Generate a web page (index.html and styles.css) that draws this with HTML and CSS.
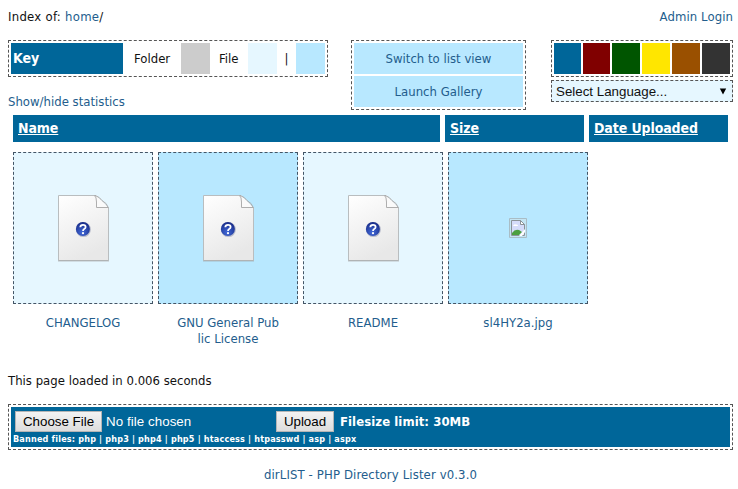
FILE: index.html
```html
<!DOCTYPE html>
<html lang="en">
<head>
<meta charset="utf-8">
<title>Index of: home/</title>
<link rel="stylesheet" href="styles.css">
</head>
<body>
<svg class="defs" width="0" height="0" aria-hidden="true">
  <defs>
    <linearGradient id="paper" x1="0" y1="0" x2="0.4" y2="1"><stop offset="0" stop-color="#fff"/><stop offset="1" stop-color="#e8e8e8"/></linearGradient>
    <radialGradient id="ball" cx="0.45" cy="0.75" r="0.75"><stop offset="0" stop-color="#4169d8"/><stop offset="1" stop-color="#172a86"/></radialGradient>
    <symbol id="doc" viewBox="0 0 54 68">
      <path d="M2.500 1.500H40L52.500 14V66.500H2.500Z" fill="url(#paper)" stroke="#b9bdbf"/>
      <path d="M2 67H53" stroke="#999" stroke-opacity=".55"/>
      <path d="M40 1.500V14H52.500Q48 9 45 6Z" fill="#fafafa"/>
      <path d="M38.500 1.500Q40.500 3 40.500 8V13.500H52M39 1.500Q44 3 46 6.500Q51 9 52.500 14" fill="none" stroke="#a5a5a5" stroke-width=".9"/>
      <circle cx="27.400" cy="35.600" r="7.500" fill="#b9bdcc"/>
      <circle cx="26.900" cy="35" r="7" fill="url(#ball)"/>
      <path d="M24.300 33.300Q24.400 30.900 27 30.900Q29.600 30.900 29.600 33Q29.600 34.200 28.200 35Q27 35.700 27 36.900" fill="none" stroke="#fff" stroke-width="1.800"/>
      <circle cx="27" cy="39.200" r="1.100" fill="#fff"/>
    </symbol>
  </defs>
</svg>
<header class="top"><div class="path">Index of: <a>home</a>/</div><a class="login">Admin Login</a></header>
<section class="tools">
  <div class="left">
    <div class="box key"><b class="key-title">Key</b><span class="folder">Folder</span><i class="chip grey"></i><span class="file">File</span><i class="chip pale"></i><span class="bar">|</span><i class="chip sky"></i></div>
    <a class="stats">Show/hide statistics</a>
  </div>
  <div class="box views"><a>Switch to list view</a><a>Launch Gallery</a></div>
  <div class="right">
    <div class="box swatches"><i class="blue"></i><i class="red"></i><i class="green"></i><i class="yellow"></i><i class="brown"></i><i class="dark"></i></div>
    <div class="language"><span>Select Language...</span><svg width="8" height="7" viewBox="0 0 8 7"><path d="M.8.500H7.200L4 6.500Z"/></svg></div>
  </div>
</section>
<div class="heads"><b>Name</b><b>Size</b><b>Date Uploaded</b></div>
<main class="grid">
  <div class="item"><div class="thumb"><svg class="doc"><use href="#doc"/></svg></div><a>CHANGELOG</a></div>
  <div class="item alt"><div class="thumb"><svg class="doc"><use href="#doc"/></svg></div><a>GNU General Pub<br>lic License</a></div>
  <div class="item"><div class="thumb"><svg class="doc"><use href="#doc"/></svg></div><a>README</a></div>
  <div class="item alt"><div class="thumb"><svg class="broken" viewBox="0 0 18 20"><path d="M.5.500H17.500V19.500H.500Z" fill="#c4e5f3" stroke="#a9bdc6"/><path d="M2.500 2.500H11.500L15.500 6.500V17.500H2.500Z" fill="#d5dcfa" stroke="#8b9398"/><path d="M11.500 2.500V6.500H15.500Z" fill="#fff" stroke="#8b9398"/><path d="M4 8Q5 5.500 7 6.500Q9 6 9 8Z" fill="#fff"/><path d="M3 17V15Q6 10.500 10 12L13 14L10 17Z" fill="#4b9f3f"/><path d="M10 18L16 11V14L13 18Z" fill="#fff"/></svg></div><a>sl4HY2a.jpg</a></div>
</main>
<p class="loaded">This page loaded in 0.006 seconds</p>
<section class="box upload"><div class="upload-inner">
  <div class="controls"><button class="choose">Choose File</button><span class="none">No file chosen</span><button class="send">Upload</button><b>Filesize limit: 30MB</b></div>
  <div class="banned">Banned files: php | php3 | php4 | php5 | htaccess | htpasswd | asp | aspx</div>
</div></section>
<footer><a>dirLIST - PHP Directory Lister v0.3.0</a></footer>
</body>
</html>
```
FILE: styles.css
```css
* { box-sizing: border-box; }
body { margin: 0; padding: 9px 5px 0 8px; width: 738px; height: 489px; overflow: hidden; background: #fff; color: #111; font: 13px/16px "DejaVu Sans Condensed", "DejaVu Sans", sans-serif; font-stretch: condensed; letter-spacing: 0.01px; }
a { color: #235d8d; }
i { display: block; }
.defs { display: block; position: absolute; }
.top { display: flex; justify-content: space-between; height: 31px; }
.path { letter-spacing: 0.27px; }
.login { letter-spacing: 0.08px; }
.box { border: 1px dashed #555; padding: 2px; }
.tools { display: flex; height: 75px; align-items: flex-start; }
.left { width: 320px; margin-right: 23px; }
.key { display: flex; height: 37px; line-height: 31px; }
.key-title { width: 112px; padding-left: 2px; background: #069; color: #fff; font-size: 14px; }
.folder { width: 58px; padding-left: 11px; }
.file { width: 38px; padding-left: 9px; }
.bar { width: 19px; text-align: center; }
.chip { width: 29px; }
.grey { background: #ccc; }
.pale { background: #e6f7ff; }
.sky { background: #b8e8ff; }
.stats { display: block; margin-top: 17px; }
.views { width: 175px; height: 70px; margin-right: 25px; display: grid; gap: 2px; text-align: center; line-height: 31px; }
.views a { background: #b8e8ff; }
.right { width: 182px; }
.swatches { display: grid; grid-template-columns: 27px 27px 28px 28px 28px 28px; gap: 2px; height: 37px; }
.blue { background: #069; }
.red { background: #800000; }
.green { background: #050; }
.yellow { background: #ffe600; }
.brown { background: #9a5000; }
.dark { background: #333; }
.language { display: flex; align-items: center; justify-content: space-between; height: 22px; margin-top: 3px; padding: 0 5px 0 4px; border: 1px dashed #555; background: #e6f7ff; font: 13.333px "Liberation Sans", sans-serif; letter-spacing: 0; }
.heads { display: grid; grid-template-columns: 427px 139px 139px; gap: 5px; margin-left: 5px; height: 27px; color: #fff; font-size: 14px; line-height: 27px; letter-spacing: -0.1px; }
.heads b { background: #069; padding-left: 5px; text-decoration: underline; }
.grid { display: grid; grid-template-columns: repeat(4, 140px); gap: 5px; margin: 10px 0 0 5px; height: 220px; }
.item { text-align: center; }
.item a { display: block; margin-top: 11px; }
.thumb { height: 152px; border: 1px dashed #456; background: #e6f7ff; display: grid; place-items: center; }
.alt .thumb { background: #b8e8ff; }
.doc { width: 54px; height: 68px; display: block; }
.broken { width: 18px; height: 20px; }
.loaded { margin: 0; height: 32px; padding-top: 1px; }
.upload { width: 725px; height: 46px; }
.upload-inner { height: 40px; background: #069; color: #fff; padding: 4px 4px 0; }
.controls { display: flex; height: 21px; line-height: 21px; letter-spacing: 0.06px; }
button { height: 21px; padding: 0; border: 1px solid #b5b5b5; border-radius: 0; background: linear-gradient(#f3f3f3, #ddd); color: #000; font: 13.333px/19px "Liberation Sans", sans-serif; }
.choose { width: 87px; }
.none { width: 170px; margin-left: 4px; font: 13.333px/21px "Liberation Sans", sans-serif; }
.send { width: 58px; margin-right: 6px; }
.banned { margin: 1px 0 0 -2px; font-size: 9px; line-height: 13px; font-weight: bold; white-space: nowrap; letter-spacing: 0.18px; }
footer { margin-top: 17px; text-align: center; letter-spacing: 0.12px; }
```
